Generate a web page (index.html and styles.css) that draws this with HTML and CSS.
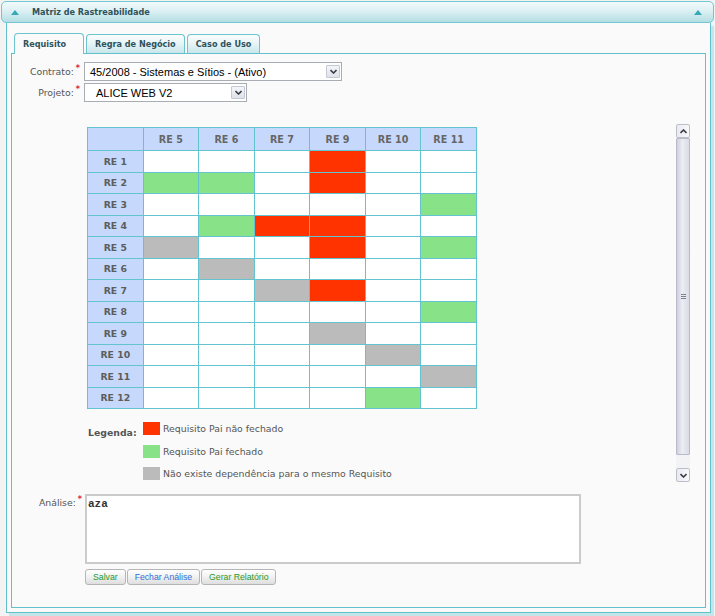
FILE: index.html
```html
<!DOCTYPE html>
<html lang="pt-BR">
<head>
<meta charset="utf-8">
<title>Matriz de Rastreabilidade</title>
<link rel="stylesheet" href="styles.css">
</head>
<body>
<div class="portlet">
  <div class="portlet-header">
    <svg class="tri" viewBox="0 0 8 5"><path d="M0 5 L4 0 L8 5 Z"/></svg>
    <span class="portlet-title">Matriz de Rastreabilidade</span>
    <svg class="tri" viewBox="0 0 8 5"><path d="M0 5 L4 0 L8 5 Z"/></svg>
  </div>
  <div class="portlet-body">
    <div class="tabs">
      <div class="tab tab-active tab-first">Requisito</div>
      <div class="tab">Regra de Negócio</div>
      <div class="tab">Caso de Uso</div>
    </div>
    <div class="tab-panel">
      <div class="form-row">
        <div class="field-label">Contrato:<span class="req">*</span></div>
        <div class="combo combo-wide">
          <span class="combo-text">45/2008 - Sistemas e Sítios - (Ativo)</span>
          <span class="combo-btn"><svg viewBox="0 0 7 5"><path d="M0.5 1 L3.5 4 L6.5 1"/></svg></span>
        </div>
      </div>
      <div class="form-row">
        <div class="field-label">Projeto:<span class="req">*</span></div>
        <div class="combo combo-narrow">
          <span class="combo-text combo-text-indent">ALICE WEB V2</span>
          <span class="combo-btn"><svg viewBox="0 0 7 5"><path d="M0.5 1 L3.5 4 L6.5 1"/></svg></span>
        </div>
      </div>

      <div class="matrix-area">
        <div class="matrix-content">
          <table class="matrix">
            <thead>
              <tr><th class="corner"></th><th>RE 5</th><th>RE 6</th><th>RE 7</th><th>RE 9</th><th>RE 10</th><th>RE 11</th></tr>
            </thead>
            <tbody>
              <tr><th>RE 1</th><td></td><td></td><td></td><td class="red"></td><td></td><td></td></tr>
              <tr><th>RE 2</th><td class="green"></td><td class="green"></td><td></td><td class="red"></td><td></td><td></td></tr>
              <tr><th>RE 3</th><td></td><td></td><td></td><td></td><td></td><td class="green"></td></tr>
              <tr><th>RE 4</th><td></td><td class="green"></td><td class="red"></td><td class="red"></td><td></td><td></td></tr>
              <tr><th>RE 5</th><td class="gray"></td><td></td><td></td><td class="red"></td><td></td><td class="green"></td></tr>
              <tr><th>RE 6</th><td></td><td class="gray"></td><td></td><td></td><td></td><td></td></tr>
              <tr><th>RE 7</th><td></td><td></td><td class="gray"></td><td class="red"></td><td></td><td></td></tr>
              <tr><th>RE 8</th><td></td><td></td><td></td><td></td><td></td><td class="green"></td></tr>
              <tr><th>RE 9</th><td></td><td></td><td></td><td class="gray"></td><td></td><td></td></tr>
              <tr><th>RE 10</th><td></td><td></td><td></td><td></td><td class="gray"></td><td></td></tr>
              <tr><th>RE 11</th><td></td><td></td><td></td><td></td><td></td><td class="gray"></td></tr>
              <tr><th>RE 12</th><td></td><td></td><td></td><td></td><td class="green"></td><td></td></tr>
            </tbody>
          </table>
          <div class="legend">
            <div class="legend-title">Legenda:</div>
            <div class="legend-items">
              <div class="legend-item"><span class="swatch red"></span>Requisito Pai não fechado</div>
              <div class="legend-item"><span class="swatch green"></span>Requisito Pai fechado</div>
              <div class="legend-item"><span class="swatch gray"></span>Não existe dependência para o mesmo Requisito</div>
            </div>
          </div>
        </div>
        <div class="vscroll">
          <div class="sb-btn"><svg viewBox="0 0 7 5"><path d="M0.5 4 L3.5 1 L6.5 4"/></svg></div>
          <div class="sb-track">
            <div class="sb-thumb"><span class="grip"></span></div>
          </div>
          <div class="sb-btn"><svg viewBox="0 0 7 5"><path d="M0.5 1 L3.5 4 L6.5 1"/></svg></div>
        </div>
      </div>

      <div class="form-row analysis-row">
        <div class="field-label field-label-top">Análise:<span class="req">*</span></div>
        <div class="textarea">aza</div>
      </div>
      <div class="buttons">
        <button class="btn btn-green">Salvar</button>
        <button class="btn btn-blue">Fechar Análise</button>
        <button class="btn btn-green">Gerar Relatório</button>
      </div>
    </div>
  </div>
</div>
</body>
</html>
```

FILE: styles.css
```css
* { box-sizing: border-box; }
html, body { margin: 0; padding: 0; }
body {
  width: 715px;
  height: 616px;
  overflow: hidden;
  background: #f3f3f3;
  font-family: "DejaVu Sans", Verdana, sans-serif;
  font-size: 9.33px;
  color: #555;
}

.portlet { padding-top: 1px; }

.portlet-header {
  display: flex;
  align-items: center;
  width: 713px;
  height: 22px;
  margin-left: 1px;
  padding: 0 11px 0 9px;
  border: 1px solid #74c7d2;
  border-radius: 5px;
  background: linear-gradient(#f3fafb, #dcf0f3 45%, #b3dee4);
}
.tri { width: 8px; height: 5px; fill: #36a8b8; flex: none; }
.portlet-title {
  flex: 1;
  margin-left: 13px;
  font-family: "DejaVu Sans Condensed", "DejaVu Sans", sans-serif;
  font-stretch: condensed;
  font-weight: bold;
  font-size: 9px;
  color: #2f525b;
}

.portlet-body {
  display: flex;
  flex-direction: column;
  width: 705px;
  height: 590px;
  margin-left: 6px;
  padding: 10px 4px 4px 4px;
  border: 1px solid #62c1cd;
  border-top: 0;
  background: #fafafa;
  box-shadow: 3px 3px 0 #c4e6ea;
}

.tabs {
  display: flex;
  align-items: flex-end;
  gap: 2px;
  height: 20px;
  padding-left: 3px;
}
.tab {
  height: 19px;
  padding: 0 8px;
  display: flex;
  align-items: center;
  border: 1px solid #6cc4cf;
  border-bottom: 0;
  border-radius: 4px 4px 0 0;
  background: linear-gradient(#fbfdfd, #e6f4f6 50%, #c8e7eb);
  font-family: "DejaVu Sans Condensed", "DejaVu Sans", sans-serif;
  font-stretch: condensed;
  font-weight: bold;
  font-size: 9px;
  color: #2f525b;
}
.tab-first { width: 70px; }
.tab-active {
  position: relative;
  z-index: 1;
  height: 21px;
  margin-bottom: -1px;
  background: #fafafa;
}

.tab-panel {
  flex: 1;
  display: flex;
  flex-direction: column;
  padding-top: 8px;
  border: 1px solid #62c1cd;
  background: #fafafa;
}

.form-row {
  display: flex;
  align-items: center;
  margin-bottom: 2px;
}
.field-label {
  width: 72px;
  flex: none;
  padding-right: 4px;
  text-align: right;
  line-height: 12px;
  color: #555;
  font-size: 9.33px;
  white-space: nowrap;
}
.req {
  display: inline-block;
  vertical-align: top;
  height: 6px;
  margin-left: 2px;
  color: #e0292b;
  font-size: 8px;
  font-weight: bold;
  line-height: 6px;
}

.combo {
  display: flex;
  align-items: center;
  height: 19px;
  border: 1px solid #a8adb3;
  background: #fff;
  padding: 1px;
}
.combo-wide { width: 258px; }
.combo-narrow { width: 163px; }
.combo-text {
  flex: 1;
  padding-left: 4px;
  font-family: "Liberation Sans", Arial, sans-serif;
  font-size: 11px;
  color: #000;
  white-space: nowrap;
}
.combo-text-indent { padding-left: 10px; }
.combo-btn {
  width: 14px;
  height: 13px;
  display: flex;
  align-items: center;
  justify-content: center;
  border: 1px solid #c3c8d2;
  border-radius: 1px;
  background: linear-gradient(#f4f5f8, #dfe2e9);
}
.combo-btn svg, .sb-btn svg {
  width: 7px;
  height: 5px;
  fill: none;
  stroke: #3b3f4a;
  stroke-width: 1.6;
}

.matrix-area {
  display: flex;
  height: 358px;
  margin-top: 20px;
  margin-right: 15px;
}
.matrix-content {
  flex: 1;
  padding: 3px 0 0 75px;
}
.matrix {
  width: 390px;
  border-collapse: collapse;
  table-layout: fixed;
}
.matrix th, .matrix td {
  border: 1px solid #63c3cf;
  padding: 0;
  text-align: center;
}
.matrix thead th {
  height: 23px;
  background: #c6d9fc;
  color: #666;
  font-weight: bold;
  font-size: 9.6px;
}
.matrix tbody th {
  background: #c6d9fc;
  color: #5d5d5d;
  font-weight: bold;
  font-size: 9.33px;
}
.matrix tbody tr { height: 21.5px; }
.matrix td { background: #fff; }
.matrix td.red, .swatch.red { background: #ff3300; }
.matrix td.green, .swatch.green { background: #88e288; }
.matrix td.gray, .swatch.gray { background: #bbbbbb; }

.legend {
  display: flex;
  margin-top: 13px;
}
.legend-title {
  width: 56px;
  padding: 5px 0 0 1px;
  font-weight: bold;
  font-size: 9.33px;
  color: #555;
}
.legend-items {
  display: flex;
  flex-direction: column;
  gap: 9.5px;
}
.legend-item {
  display: flex;
  align-items: center;
  gap: 3px;
  height: 13px;
  color: #555;
}
.swatch {
  width: 17px;
  height: 13px;
  flex: none;
}

.vscroll {
  width: 14px;
  display: flex;
  flex-direction: column;
}
.sb-btn {
  height: 14px;
  display: flex;
  align-items: center;
  justify-content: center;
  border: 1px solid #bcbfcb;
  border-radius: 2px;
  background: linear-gradient(90deg, #e9ebf1, #f8f8fa);
}
.sb-track {
  flex: 1;
  padding-bottom: 13px;
  background: #f3f3f5;
}
.sb-thumb {
  height: 100%;
  display: flex;
  align-items: center;
  justify-content: center;
  border: 1px solid #b8bac9;
  border-radius: 1px;
  background: linear-gradient(90deg, #cdd0de, #eceef4 45%, #d9dbe6);
}
.grip {
  width: 5px;
  height: 5px;
  background: repeating-linear-gradient(#7d8090 0 1px, transparent 1px 2px);
}

.analysis-row {
  align-items: flex-start;
  margin-top: 12px;
  margin-bottom: 0;
}
.field-label-top { padding-top: 3px; padding-right: 3px; width: 73px; }
.textarea {
  width: 496px;
  height: 70px;
  padding: 2px 1px;
  border: 2px solid #cbcbcb;
  background: #fff;
  font-family: "Liberation Mono", "Courier New", monospace;
  font-weight: bold;
  font-size: 11px;
  color: #333;
}

.buttons {
  display: flex;
  gap: 1px;
  margin: 5px 0 0 73px;
}
.btn {
  height: 16px;
  margin: 0;
  padding: 0 7px;
  border: 1px solid #b5b5b5;
  border-radius: 3px;
  background: linear-gradient(#ffffff, #f1f1f1 50%, #dedede);
  font-family: "Liberation Sans", Arial, sans-serif;
  font-size: 8.7px;
  line-height: 14px;
}
.btn-green { color: #1f9a2b; }
.btn-blue { color: #2f6fd8; }
```
